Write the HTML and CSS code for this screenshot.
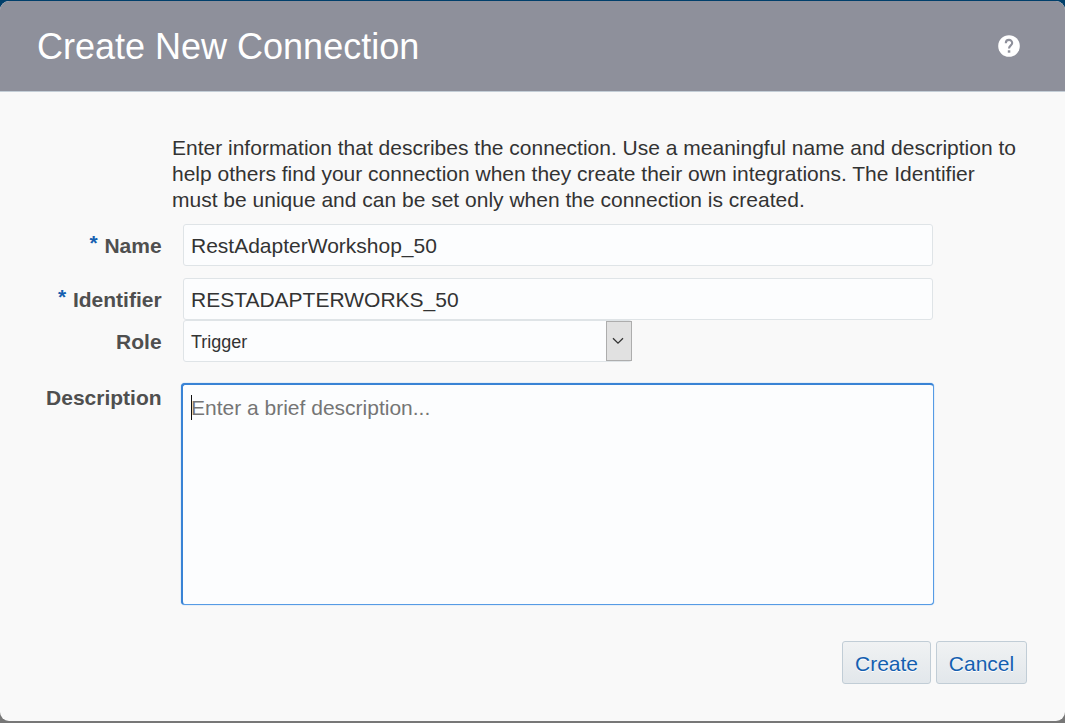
FILE: index.html
```html
<!DOCTYPE html>
<html lang="en">
<head>
<meta charset="utf-8">
<title>Create New Connection</title>
<link rel="stylesheet" href="styles.css">
</head>
<body>
<main class="dialog">
  <header class="dialog-header">
    <h1 class="title">Create New Connection</h1>
    <svg class="help" viewBox="0 0 22 22" aria-label="Help">
      <circle cx="11" cy="11" r="10.8" fill="#fff"/>
      <path d="M7.8 8.2C7.8 3.8 14.2 3.8 14.2 8.1C14.2 10.5 11 10.4 11 13.6" fill="none" stroke="#8e909b" stroke-width="2.1"/>
      <rect x="9.8" y="15.3" width="2.5" height="2.4" fill="#8e909b"/>
    </svg>
  </header>
  <section class="content">
    <p class="intro">Enter information that describes the connection. Use a meaningful name and description to<br>help others find your connection when they create their own integrations. The Identifier<br>must be unique and can be set only when the connection is created.</p>
    <div class="row row-name">
      <label class="label"><span class="required">*</span> Name</label>
      <div class="field">RestAdapterWorkshop_50</div>
    </div>
    <div class="row">
      <label class="label"><span class="required">*</span> Identifier</label>
      <div class="field field-id">RESTADAPTERWORKS_50</div>
    </div>
    <div class="row row-role">
      <label class="label">Role</label>
      <div class="field select"><span>Trigger</span>
        <span class="select-button"><svg class="chevron" viewBox="0 0 12 8"><path d="M1 1.2L6 6.2L11 1.2" fill="none" stroke="#333" stroke-width="1.3"/></svg></span>
      </div>
    </div>
    <div class="row row-description">
      <label class="label">Description</label>
      <div class="textarea"><span class="caret"></span><span class="placeholder">Enter a brief description...</span></div>
    </div>
  </section>
  <footer class="actions">
    <button class="button create">Create</button>
    <button class="button cancel">Cancel</button>
  </footer>
</main>
</body>
</html>
```
FILE: styles.css
```css
* { box-sizing: border-box; }
body {
  margin: 0;
  height: 723px;
  padding-top: 1px;
  overflow: hidden;
  background: linear-gradient(#003f6b 0 50px, #777 50px);
  font: 21px/26px "Liberation Sans", Arial, sans-serif;
  color: #333;
}
.dialog {
  height: 720px;
  display: flex;
  flex-direction: column;
  background: #f9f9f9;
  border-radius: 9px;
  overflow: hidden;
}
.dialog-header {
  height: 91px;
  flex: none;
  display: flex;
  align-items: center;
  justify-content: space-between;
  padding: 0 45px 0 37px;
  background: #8e909b;
  border-bottom: 1px solid #c4ced7;
}
.title { margin: 0; padding-top: 2px; font-size: 36px; font-weight: 400; line-height: 44px; color: #fff; }
.help { width: 22px; height: 22px; }
.content { padding-top: 43px; }
.intro { margin: 0 0 11px 172px; white-space: nowrap; }
.row { display: flex; height: 42px; }
.row-name { margin-bottom: 12px; }
.label {
  width: 161.6px;
  margin-right: 21.4px;
  text-align: right;
  line-height: 44px;
  font-weight: 700;
  color: #4f4f4f;
  white-space: nowrap;
}
.required { margin-right: 1px; color: #145fb0; font-weight: 700; vertical-align: 3px; line-height: 1; }
.field {
  width: 750px;
  height: 42px;
  padding-left: 7px;
  line-height: 41px;
  background: #fcfdfe;
  border: 1px solid #dfe4e7;
  border-radius: 3px;
}
.select {
  width: 449px;
  display: flex;
  justify-content: space-between;
  font-size: 18px;
  line-height: 42px;
}
.select-button {
  width: 26px;
  height: 40px;
  margin-right: -1px;
  display: flex;
  align-items: center;
  justify-content: center;
  background: #e1e1e1;
  border: 1px solid #adadad;
}
.chevron { width: 12px; height: 8px; margin-right: 1px; }
.row-description { margin-top: 21px; height: 222px; }
.row-description .label { line-height: 30px; margin-right: 19.4px; }
.textarea {
  width: 753px;
  height: 222px;
  display: flex;
  align-items: flex-start;
  padding: 10px 8px;
  background: #fcfdfe;
  border: 1px solid #569be5;
  border-top: 2px solid #3983d5;
  border-left: 2px solid #3983d5;
  border-radius: 4px;
  box-shadow: 0 0 1px #4a94e5;
}
.caret { width: 1px; height: 25px; background: #111; }
.placeholder { margin-left: -1px; color: #757575; }
.actions { display: flex; justify-content: flex-end; gap: 5px; padding: 36px 38px 0 0; }
.button {
  height: 43px;
  padding: 2px 0 0;
  font: 21px "Liberation Sans", Arial, sans-serif;
  color: #145fb0;
  text-shadow: 0 1px 0 #fff;
  background: linear-gradient(#f0f2f3, #e2e7eb);
  border: 1px solid #c1cdd6;
  border-radius: 3px;
}
.create { width: 89px; }
.cancel { width: 91px; }
```
